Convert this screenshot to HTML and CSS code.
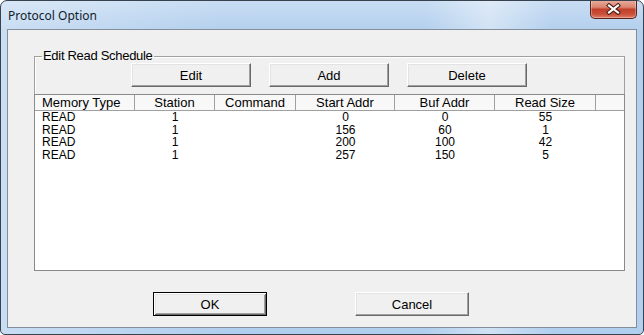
FILE: index.html
```html
<!DOCTYPE html>
<html lang="en">
<head>
    <meta charset="UTF-8">
    <title>Protocol Option</title>
    <link rel="stylesheet" href="styles.css">
</head>
<body>
    <div class="window">
        <div class="titlebar">
            <span class="title">Protocol Option</span>
            <button class="close" aria-label="Close">
                <svg width="15" height="12" viewBox="0 0 15 12">
                    <path d="M3 2.5 L12 9.5 M12 2.5 L3 9.5" stroke="#4a1c14" stroke-width="4.2" stroke-linecap="square"/>
                    <path d="M3 2.5 L12 9.5 M12 2.5 L3 9.5" stroke="#ffffff" stroke-width="2.2" stroke-linecap="square"/>
                </svg>
            </button>
        </div>
        <div class="client">
            <fieldset class="group">
                <legend>Edit Read Schedule</legend>
                <div class="toolbar">
                    <button class="btn">Edit</button>
                    <button class="btn">Add</button>
                    <button class="btn">Delete</button>
                </div>
                <div class="listview">
                    <table>
                        <colgroup>
                            <col class="w-type">
                            <col class="w-station">
                            <col class="w-cmd">
                            <col class="w-start">
                            <col class="w-buf">
                            <col class="w-size">
                            <col>
                        </colgroup>
                        <thead>
                            <tr>
                                <th class="first">Memory Type</th>
                                <th>Station</th>
                                <th>Command</th>
                                <th>Start Addr</th>
                                <th>Buf Addr</th>
                                <th>Read Size</th>
                                <th class="fill"></th>
                            </tr>
                        </thead>
                        <tbody>
                            <tr><td class="first">READ</td><td>1</td><td></td><td>0</td><td>0</td><td>55</td><td></td></tr>
                            <tr><td class="first">READ</td><td>1</td><td></td><td>156</td><td>60</td><td>1</td><td></td></tr>
                            <tr><td class="first">READ</td><td>1</td><td></td><td>200</td><td>100</td><td>42</td><td></td></tr>
                            <tr><td class="first">READ</td><td>1</td><td></td><td>257</td><td>150</td><td>5</td><td></td></tr>
                        </tbody>
                    </table>
                </div>
            </fieldset>
            <div class="actions">
                <button class="btn default">OK</button>
                <button class="btn">Cancel</button>
            </div>
        </div>
    </div>
</body>
</html>
```

FILE: styles.css
```css
body {
    margin: 0;
    background-color: #ffffff;
    font-family: "Liberation Sans", Arial, sans-serif;
    font-size: 13px;
    color: #000000;
}
.window {
    width: 644px;
    height: 335px;
    box-sizing: border-box;
    border: 1px solid #38424e;
    border-radius: 7px 7px 5px 5px;
    overflow: hidden;
    display: flex;
    flex-direction: column;
    background:
        linear-gradient(to right, rgba(255, 255, 255, 0.3), rgba(255, 255, 255, 0) 35%, rgba(255, 255, 255, 0) 66%, rgba(255, 255, 255, 0.4) 76%, rgba(255, 255, 255, 0) 86%),
        linear-gradient(#c8ddf3, #b4d0ee 28px, #b1cfee);
}
.titlebar {
    height: 28px;
    display: flex;
    align-items: flex-start;
    padding: 0 6px 0 7px;
}
.title {
    margin-top: 7px;
    font-family: "Noto Sans", "Open Sans", sans-serif;
    font-size: 12px;
    line-height: 16px;
    color: #121c2a;
}
.close {
    margin-left: auto;
    width: 47px;
    height: 19px;
    margin-top: -1px;
    padding: 0;
    border: 1px solid #5a2218;
    border-top: none;
    border-radius: 0 0 5px 5px;
    background: linear-gradient(#eab0a0, #da8470 40%, #c2402a 52%, #c9503a 78%, #de7c64);
    display: flex;
    align-items: center;
    justify-content: center;
    box-shadow: inset 0 0 0 1px rgba(255, 255, 255, 0.3);
}
.client {
    margin: 0 6px;
    height: 299px;
    box-sizing: border-box;
    border: 1px solid #838e9a;
    background-color: #f0f0f0;
    padding: 0 11px 0 26px;
}
.group {
    margin: 19px 0 0 0;
    padding: 0;
    min-inline-size: 0;
    border: 1px solid #a0a0a0;
    box-shadow: inset 1px 1px 0 #ffffff;
}
.group legend {
    margin-left: 7px;
    padding: 0 1px;
    line-height: 14px;
    letter-spacing: -0.3px;
}
.toolbar {
    display: flex;
    gap: 18px;
    padding-left: 96px;
}
.btn {
    width: 120px;
    height: 24px;
    box-sizing: border-box;
    padding: 0;
    font-family: inherit;
    font-size: 13px;
    color: #000000;
    background-color: #f0f0f0;
    border: 1px solid;
    border-color: #ffffff #696969 #696969 #ffffff;
    box-shadow: inset -1px -1px 0 #a0a0a0, inset 1px 1px 0 #e3e3e3;
}
.listview {
    margin: 7px -1px -1px -1px;
    height: 177px;
    box-sizing: border-box;
    border: 1px solid #8a8a8a;
    background-color: #ffffff;
}
table {
    width: 100%;
    table-layout: fixed;
    border-collapse: separate;
    border-spacing: 0;
}
.w-type { width: 100px; }
.w-station { width: 80px; }
.w-cmd { width: 81px; }
.w-start { width: 99px; }
.w-buf { width: 100px; }
.w-size { width: 101px; }
th {
    height: 15px;
    padding: 0;
    font-weight: normal;
    line-height: 15px;
    text-align: center;
    background-color: #f8f8f8;
    border-right: 1px solid #a0a0a0;
    border-bottom: 1px solid #a0a0a0;
    white-space: nowrap;
}
th.fill {
    border-right: none;
}
td {
    height: 12.67px;
    padding: 0;
    font-size: 12px;
    line-height: 12.67px;
    text-align: center;
    white-space: nowrap;
}
th.first, td.first {
    text-align: left;
    padding-left: 7px;
}
.actions {
    display: flex;
    gap: 88px;
    margin-top: 21px;
    padding-left: 119px;
}
.actions .btn {
    width: 114px;
}
.btn.default {
    border: 1px solid #000000;
    box-shadow: inset 1px 1px 0 #ffffff, inset -1px -1px 0 #696969, inset 2px 2px 0 #e3e3e3, inset -2px -2px 0 #a0a0a0;
}
```
